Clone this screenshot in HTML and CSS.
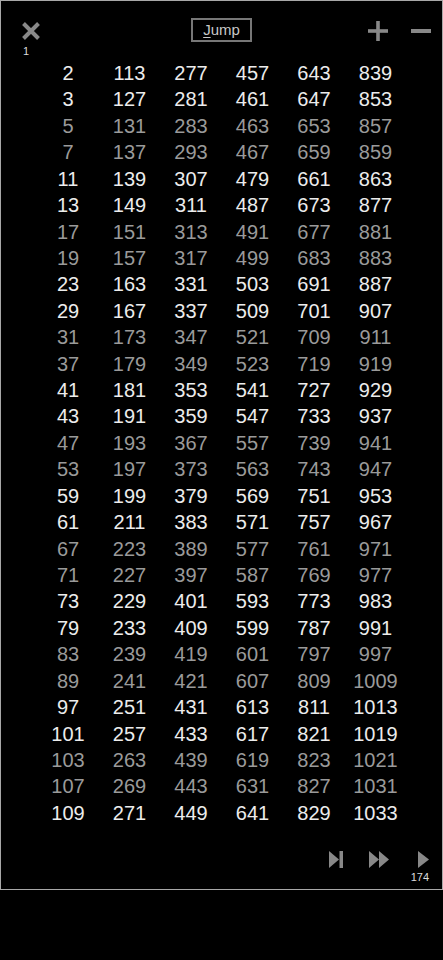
FILE: index.html
```html
<!DOCTYPE html>
<html>
<head>
<meta charset="utf-8">
<link rel="stylesheet" href="styles.css">
</head>
<body>
<div class="frame">
  <header class="top">
    <div class="left">
      <svg class="icon-x" width="18" height="18" viewBox="0 0 18 18"><path d="M1.5 1.5 L16.5 16.5 M16.5 1.5 L1.5 16.5" stroke="#888" stroke-width="4"/></svg>
      <span class="small">1</span>
    </div>
    <div class="mid"><button class="jump"><u>J</u>ump</button></div>
    <div class="right">
      <svg class="icon-plus" width="20" height="20" viewBox="0 0 20 20"><rect x="8.2" y="0" width="3.6" height="20" fill="#888"/><rect x="0" y="8.2" width="20" height="3.6" fill="#888"/></svg>
      <svg class="icon-minus" width="20" height="20" viewBox="0 0 20 20"><rect x="0" y="8" width="20" height="4" fill="#888"/></svg>
    </div>
  </header>
  <div class="table">
    <div class="row"><span>2</span><span>113</span><span>277</span><span>457</span><span>643</span><span>839</span></div>
    <div class="row"><span>3</span><span>127</span><span>281</span><span>461</span><span>647</span><span>853</span></div>
    <div class="row dim"><span>5</span><span>131</span><span>283</span><span>463</span><span>653</span><span>857</span></div>
    <div class="row dim"><span>7</span><span>137</span><span>293</span><span>467</span><span>659</span><span>859</span></div>
    <div class="row"><span>11</span><span>139</span><span>307</span><span>479</span><span>661</span><span>863</span></div>
    <div class="row"><span>13</span><span>149</span><span>311</span><span>487</span><span>673</span><span>877</span></div>
    <div class="row dim"><span>17</span><span>151</span><span>313</span><span>491</span><span>677</span><span>881</span></div>
    <div class="row dim"><span>19</span><span>157</span><span>317</span><span>499</span><span>683</span><span>883</span></div>
    <div class="row"><span>23</span><span>163</span><span>331</span><span>503</span><span>691</span><span>887</span></div>
    <div class="row"><span>29</span><span>167</span><span>337</span><span>509</span><span>701</span><span>907</span></div>
    <div class="row dim"><span>31</span><span>173</span><span>347</span><span>521</span><span>709</span><span>911</span></div>
    <div class="row dim"><span>37</span><span>179</span><span>349</span><span>523</span><span>719</span><span>919</span></div>
    <div class="row"><span>41</span><span>181</span><span>353</span><span>541</span><span>727</span><span>929</span></div>
    <div class="row"><span>43</span><span>191</span><span>359</span><span>547</span><span>733</span><span>937</span></div>
    <div class="row dim"><span>47</span><span>193</span><span>367</span><span>557</span><span>739</span><span>941</span></div>
    <div class="row dim"><span>53</span><span>197</span><span>373</span><span>563</span><span>743</span><span>947</span></div>
    <div class="row"><span>59</span><span>199</span><span>379</span><span>569</span><span>751</span><span>953</span></div>
    <div class="row"><span>61</span><span>211</span><span>383</span><span>571</span><span>757</span><span>967</span></div>
    <div class="row dim"><span>67</span><span>223</span><span>389</span><span>577</span><span>761</span><span>971</span></div>
    <div class="row dim"><span>71</span><span>227</span><span>397</span><span>587</span><span>769</span><span>977</span></div>
    <div class="row"><span>73</span><span>229</span><span>401</span><span>593</span><span>773</span><span>983</span></div>
    <div class="row"><span>79</span><span>233</span><span>409</span><span>599</span><span>787</span><span>991</span></div>
    <div class="row dim"><span>83</span><span>239</span><span>419</span><span>601</span><span>797</span><span>997</span></div>
    <div class="row dim"><span>89</span><span>241</span><span>421</span><span>607</span><span>809</span><span>1009</span></div>
    <div class="row"><span>97</span><span>251</span><span>431</span><span>613</span><span>811</span><span>1013</span></div>
    <div class="row"><span>101</span><span>257</span><span>433</span><span>617</span><span>821</span><span>1019</span></div>
    <div class="row dim"><span>103</span><span>263</span><span>439</span><span>619</span><span>823</span><span>1021</span></div>
    <div class="row dim"><span>107</span><span>269</span><span>443</span><span>631</span><span>827</span><span>1031</span></div>
    <div class="row"><span>109</span><span>271</span><span>449</span><span>641</span><span>829</span><span>1033</span></div>
  </div>
  <footer class="bottom">
    <svg class="icon-skip" width="14" height="17" viewBox="0 0 14 17"><path d="M0 0 L10 8.5 L0 17 Z" fill="#888"/><rect x="10.5" y="0" width="3.5" height="17" fill="#888"/></svg>
    <svg class="icon-ff" width="20" height="17" viewBox="0 0 20 17"><path d="M0 0 L10 8.5 L0 17 Z M10 0 L20 8.5 L10 17 Z" fill="#888"/></svg>
    <div class="play">
      <svg class="icon-play" width="11" height="17" viewBox="0 0 11 17"><path d="M0 0 L11 8.5 L0 17 Z" fill="#888"/></svg>
      <span class="small">174</span>
    </div>
  </footer>
</div>
</body>
</html>
```

FILE: styles.css
```css
html, body {
  margin: 0;
  padding: 0;
  background: #000;
}
body {
  font-family: "Liberation Sans", Arial, sans-serif;
  width: 443px;
  height: 960px;
}
.frame {
  box-sizing: border-box;
  width: 443px;
  height: 890px;
  border: 1px solid #a8a8a8;
  background: #000;
  display: flex;
  flex-direction: column;
}
.top {
  height: 59px;
  display: grid;
  grid-template-columns: 1fr auto 1fr;
  align-items: start;
}
.left {
  display: flex;
  flex-direction: column;
  align-items: flex-start;
  padding: 21px 0 0 21px;
}
.icon-x { display: block; }
.small {
  font-size: 11px;
  line-height: 11px;
  color: #dcdcdc;
}
.left .small {
  margin-top: 6px;
  padding-left: 1px;
}
.mid { padding-top: 17px; }
.jump {
  box-sizing: border-box;
  width: 61px;
  height: 24px;
  border: 2px solid #777;
  background: #000;
  color: #c8c8c8;
  font-family: "Liberation Sans", Arial, sans-serif;
  font-size: 15px;
  padding: 0;
  margin: 0;
  line-height: 20px;
}
.jump u { text-decoration-thickness: 1px; text-underline-offset: 2px; }
.right {
  display: flex;
  justify-content: flex-end;
  gap: 23px;
  padding: 20px 11px 0 0;
}
.right svg { display: block; }
.table {
  display: flex;
  flex-direction: column;
}
.row {
  display: grid;
  grid-template-columns: repeat(6, 61.5px);
  justify-content: center;
  font-size: 20px;
  line-height: 26.43px;
  height: 26.43px;
  color: #ececec;
  padding-left: 0.5px;
}
.row span { text-align: center; }
.row.dim { color: #9a9a9a; }
.bottom {
  margin-top: auto;
  display: flex;
  justify-content: flex-end;
  align-items: flex-start;
  padding: 0 13px 6px 0;
}
.bottom svg { display: block; }
.icon-skip { margin-right: 26px; }
.icon-ff { margin-right: 22px; }
.play {
  display: flex;
  flex-direction: column;
  align-items: flex-end;
}
.play .small { margin-top: 4px; }
```
